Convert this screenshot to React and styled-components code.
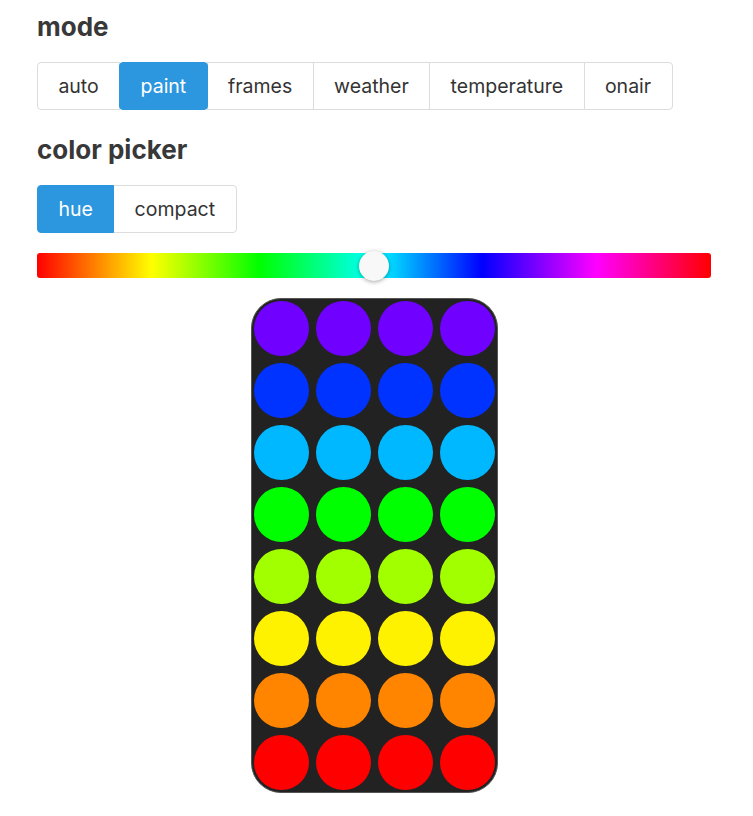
import React, { useState } from "react";
import styled, { createGlobalStyle } from "styled-components";

const GlobalStyle = createGlobalStyle`
  body {
    margin: 0;
    background: #fff;
    font-family: Inter, "Helvetica Neue", "Liberation Sans", sans-serif;
    color: #333;
  }
`;

const Page = styled.div`
  padding: 11px 42px 0 37px;
  display: flex;
  flex-direction: column;
`;

const Heading = styled.h2`
  margin: 0;
  font-size: 26px;
  line-height: 32px;
  font-weight: 700;
  color: #383838;
`;

const Group = styled.div`
  display: flex;
  margin: 19px 0 24px;
`;

const Segment = styled.button`
  height: 48px;
  padding: 0 20.4px;
  font-family: inherit;
  font-size: 19.5px;
  color: ${(p) => (p.$active ? "#fff" : "#333")};
  background: ${(p) => (p.$active ? "#2c97de" : "#fff")};
  border: 1px solid ${(p) => (p.$active ? "#2c97de" : "#dcdcdc")};
  border-radius: ${(p) => (p.$active ? "4px" : "0")};
  margin-left: -1px;
  position: relative;
  z-index: ${(p) => (p.$active ? 1 : 0)};
  cursor: pointer;

  &:first-child {
    margin-left: 0;
    border-radius: 4px 0 0 4px;
  }
  &:last-child {
    border-radius: 0 4px 4px 0;
  }
  &:first-child:last-child {
    border-radius: 4px;
  }
`;

const HueTrack = styled.div`
  position: relative;
  height: 25px;
  margin-top: -4px;
  border-radius: 3px;
  background: linear-gradient(
    to right,
    #f00 0%,
    #ff0 17%,
    #0f0 33%,
    #0ff 50%,
    #00f 66%,
    #f0f 83%,
    #f00 100%
  );
`;

const Thumb = styled.div`
  position: absolute;
  top: 50%;
  width: 30px;
  height: 30px;
  margin: -15px 0 0 -15px;
  border-radius: 50%;
  background: #f8f8f8;
  box-shadow: 0 1px 4px rgba(0, 0, 0, 0.35);
`;

const Panel = styled.div`
  align-self: center;
  margin-top: 20px;
  display: grid;
  grid-template-columns: repeat(4, 55px);
  gap: 7px;
  padding: 2px;
  background: #222;
  border: 1px solid #555;
  border-radius: 30px;
`;

const Led = styled.div`
  width: 55px;
  height: 55px;
  border-radius: 50%;
  background: ${(p) => p.$color};
`;

const modes = ["auto", "paint", "frames", "weather", "temperature", "onair"];
const pickers = ["hue", "compact"];
const rows = [
  "#7000ff",
  "#0033ff",
  "#00b8ff",
  "#00ff00",
  "#a2ff00",
  "#fff200",
  "#ff8500",
  "#ff0000",
];

export default function App() {
  const [mode, setMode] = useState("paint");
  const [picker, setPicker] = useState("hue");
  const hue = 0.5;

  return (
    <Page>
      <GlobalStyle />
      <Heading>mode</Heading>
      <Group>
        {modes.map((m) => (
          <Segment key={m} $active={m === mode} onClick={() => setMode(m)}>
            {m}
          </Segment>
        ))}
      </Group>
      <Heading>color picker</Heading>
      <Group>
        {pickers.map((m) => (
          <Segment key={m} $active={m === picker} onClick={() => setPicker(m)}>
            {m}
          </Segment>
        ))}
      </Group>
      <HueTrack>
        <Thumb style={{ left: `${hue * 100}%` }} />
      </HueTrack>
      <Panel>
        {rows.map((c, r) =>
          [0, 1, 2, 3].map((i) => <Led key={`${r}-${i}`} $color={c} />)
        )}
      </Panel>
    </Page>
  );
}
